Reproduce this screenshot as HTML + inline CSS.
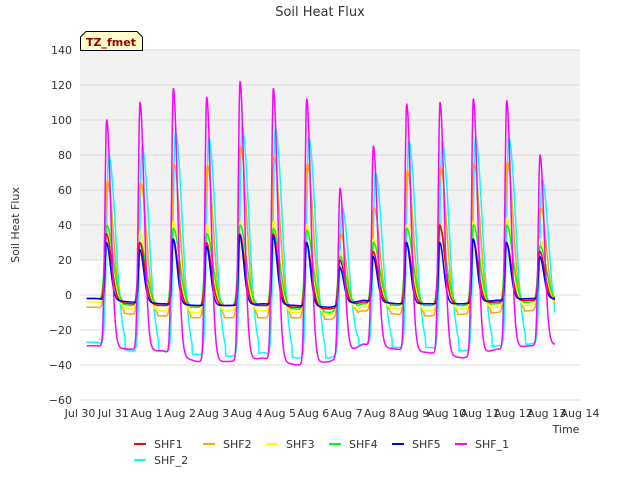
<!DOCTYPE html><html><head><style>body{margin:0;background:#fff;width:640px;height:480px;overflow:hidden}svg{font-family:"DejaVu Sans","Liberation Sans",sans-serif}</style></head><body>
<svg id="s" width="640" height="480" viewBox="0 0 640 480" xmlns="http://www.w3.org/2000/svg">
<rect x="80" y="50" width="500" height="350" fill="#fff"/>
<rect x="80" y="50" width="500" height="210" fill="#f2f2f2"/>
<g stroke="#dcdcdc" stroke-width="1">
<line x1="80" x2="580" y1="50" y2="50"/><line x1="80" x2="580" y1="85" y2="85"/><line x1="80" x2="580" y1="120" y2="120"/><line x1="80" x2="580" y1="155" y2="155"/><line x1="80" x2="580" y1="190" y2="190"/><line x1="80" x2="580" y1="225" y2="225"/><line x1="80" x2="580" y1="260" y2="260"/><line x1="80" x2="580" y1="295" y2="295"/><line x1="80" x2="580" y1="330" y2="330"/><line x1="80" x2="580" y1="365" y2="365"/><line x1="80" x2="580" y1="400" y2="400"/>
</g>
<g id="lines" fill="none" stroke-width="1.5" stroke-linejoin="round"></g>
<text x="320" y="16" font-size="13" text-anchor="middle" fill="#333">Soil Heat Flux</text>
<g font-size="11" fill="#333" text-anchor="end">
<text x="72" y="54">140</text><text x="72" y="89">120</text><text x="72" y="124">100</text><text x="72" y="159">80</text><text x="72" y="194">60</text><text x="72" y="229">40</text><text x="72" y="264">20</text><text x="72" y="299">0</text><text x="72" y="334">−20</text><text x="72" y="369">−40</text><text x="72" y="404">−60</text>
</g>
<g id="xt" font-size="11" fill="#333" text-anchor="middle"></g>
<text x="19" y="225" font-size="11" fill="#333" text-anchor="middle" transform="rotate(-90 19 225)">Soil Heat Flux</text>
<text x="566" y="433" font-size="11" fill="#333" text-anchor="middle">Time</text>
<path d="M80.5 50.5 V37 L86 31.5 H137 L142.5 37 V50.5 Z" fill="#ffffcc" stroke="#000" stroke-width="1"/>
<text x="111" y="46" font-size="11" font-weight="bold" fill="#990000" text-anchor="middle">TZ_fmet</text>
<g font-size="11" fill="#333">
<line x1="134" x2="146" y1="444" y2="444" stroke="#f00" stroke-width="2"/><text x="154" y="448">SHF1</text>
<line x1="203" x2="215" y1="444" y2="444" stroke="#ffa500" stroke-width="2"/><text x="223" y="448">SHF2</text>
<line x1="266" x2="278" y1="444" y2="444" stroke="#ff0" stroke-width="2"/><text x="286" y="448">SHF3</text>
<line x1="329" x2="341" y1="444" y2="444" stroke="#0f0" stroke-width="2"/><text x="349" y="448">SHF4</text>
<line x1="392" x2="404" y1="444" y2="444" stroke="#00f" stroke-width="2"/><text x="412" y="448">SHF5</text>
<line x1="455" x2="467" y1="444" y2="444" stroke="#f0f" stroke-width="2"/><text x="475" y="448">SHF_1</text>
<line x1="134" x2="146" y1="460" y2="460" stroke="#0ff" stroke-width="2"/><text x="154" y="464">SHF_2</text>
</g>
</svg>
<script>
var NS="http://www.w3.org/2000/svg";
var labs=["Jul 30","Jul 31","Aug 1","Aug 2","Aug 3","Aug 4","Aug 5","Aug 6","Aug 7","Aug 8","Aug 9","Aug 10","Aug 11","Aug 12","Aug 13","Aug 14"];
var xt=document.getElementById("xt");
for(var i=0;i<16;i++){var x=80+i*500/15;var t=document.createElementNS(NS,"text");t.setAttribute("x",x);t.setAttribute("y",417);t.textContent=labs[i];xt.appendChild(t);}
var mag=[100,110,118,113,122,118,112,61,85,109,110,112,111,80];
var magMin=[-29,-31,-32,-38,-38,-36,-40,-38,-28,-31,-33,-36,-31,-29,-28];
function Y(v){return 295-v*1.75;}
var D=500/15;
var series=[
 {c:"#0ff",pk:[80,85,93,90,96,95,90,50,70,88,88,90,90,66],mn:[-27,-32,-32,-34,-35,-33,-36,-36,-28,-30,-30,-32,-29,-28,-24],ph:0.86,w:0.09,dec:0.2},
 {c:"#ffa500",pk:[65,64,75,74,85,79,75,35,50,71,73,75,76,50],mn:[-7,-11,-12,-13,-13,-13,-13,-14,-9,-11,-12,-11,-10,-9,-8],ph:0.82,w:0.09,dec:0.16},
 {c:"#ff0",pk:[40,36,42,40,42,42,40,25,32,40,40,42,44,32],mn:[-4,-8,-9,-10,-9,-9,-10,-11,-7,-8,-9,-8,-7,-6,-5],ph:0.8,w:0.09,dec:0.15},
 {c:"#0f0",pk:[40,30,38,35,40,38,37,22,30,38,38,40,40,28],mn:[-2,-6,-6,-7,-6,-6,-8,-10,-5,-6,-6,-6,-5,-4,-3],ph:0.8,w:0.09,dec:0.17},
 {c:"#f00",pk:[35,30,32,30,35,35,30,20,25,30,40,32,30,25],mn:[-2,-5,-6,-6,-6,-6,-7,-8,-4,-5,-5,-5,-4,-3,-3],ph:0.79,w:0.07,dec:0.14},
 {c:"#00f",pk:[30,26,32,28,34,34,30,16,22,30,30,32,30,22],mn:[-2,-4,-5,-6,-6,-5,-6,-7,-3,-5,-5,-5,-3,-2,-2],ph:0.79,w:0.05,dec:0.12},
 {c:"#f0f",pk:mag,mn:magMin,ph:0.8,w:0.075,dec:0.1}
];
var g=document.getElementById("lines");
series.forEach(function(s){
 var d="";
 for(var t=0.2;t<=14.25;t+=0.01){
  var kb=Math.floor(t-0.5);var fr=(t-0.5)-kb;if(kb<0){kb=0;fr=0;}if(kb>13){kb=13;fr=1;}
  var base=s.mn[kb]+(s.mn[kb+1]-s.mn[kb])*fr;
  var kk=Math.round(t-s.ph);if(kk<0)kk=0;if(kk>13)kk=13;
  var dt=t-(kk+s.ph);
  var f=dt<0?Math.exp(-Math.pow(dt/s.w,2)):Math.exp(-Math.pow(dt/(s.w+s.dec),2));
  var v=base+(s.pk[kk]-base)*f;
  var x=80+t*D;
  d+=(d?"L":"M")+x.toFixed(1)+" "+Y(v).toFixed(1);
 }
 var p=document.createElementNS(NS,"path");p.setAttribute("d",d);p.setAttribute("stroke",s.c);g.appendChild(p);
});
</script>
</body></html>
